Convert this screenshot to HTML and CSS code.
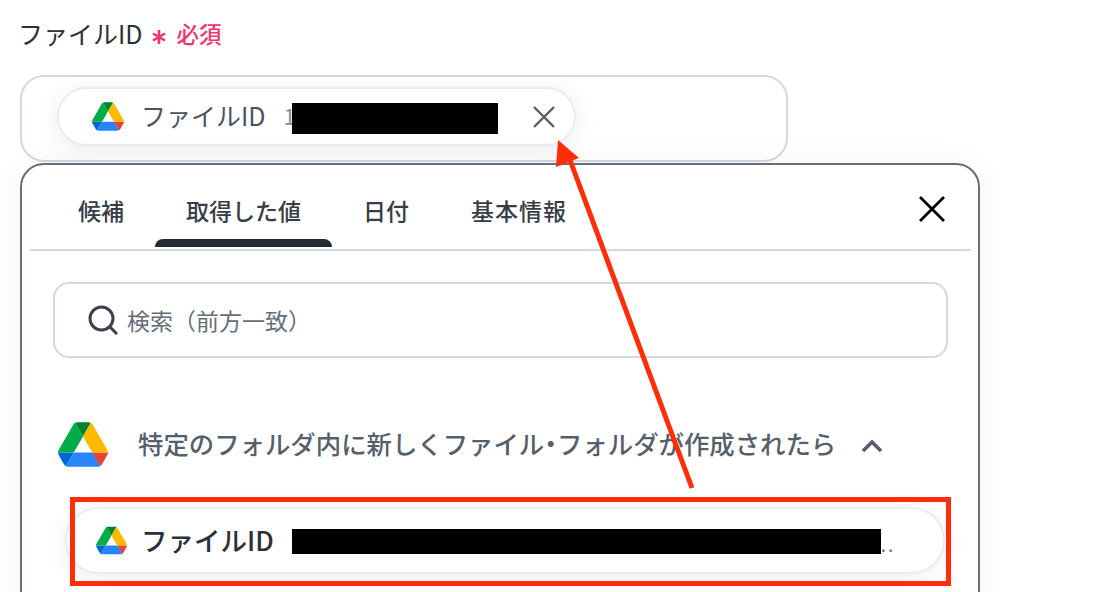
FILE: index.html
```html
<!DOCTYPE html>
<html lang="ja">
<head>
  <meta charset="UTF-8" />
  <meta name="viewport" content="width=device-width, initial-scale=1.0"/>
  <title>ファイルID</title>
  <link rel="stylesheet" href="styles.css">
</head>
<body>
  <svg class="defs" width="0" height="0">
    <symbol id="drive" viewBox="0 0 87.3 78">
      <path d="m6.6 66.85 3.85 6.65c.8 1.4 1.95 2.5 3.3 3.3l13.75-23.8h-27.5c0 1.55.4 3.1 1.2 4.5z" fill="#0066da"/>
      <path d="m43.65 25-13.75-23.8c-1.35.8-2.5 1.9-3.3 3.3l-25.4 44a9.06 9.06 0 0 0 -1.2 4.5h27.5z" fill="#00ac47"/>
      <path d="m73.55 76.8c1.35-.8 2.5-1.9 3.3-3.3l1.6-2.75 7.65-13.25c.8-1.4 1.2-2.95 1.2-4.5h-27.502l5.852 11.5z" fill="#ea4335"/>
      <path d="m43.65 25 13.75-23.8c-1.35-.8-2.9-1.2-4.5-1.2h-18.5c-1.6 0-3.15.45-4.5 1.2z" fill="#00832d"/>
      <path d="m59.8 53h-32.3l-13.75 23.8c1.35.8 2.9 1.2 4.5 1.2h50.8c1.6 0 3.15-.45 4.5-1.2z" fill="#2684fc"/>
      <path d="m73.4 26.5-12.7-22c-.8-1.4-1.95-2.5-3.3-3.3l-13.75 23.8 16.15 28h27.45c0-1.55-.4-3.1-1.2-4.5z" fill="#ffba00"/>
    </symbol>
  </svg>

  <div class="label-row">
    <span class="label">ファイルID</span>
    <svg class="asterisk" viewBox="0 0 16 16">
      <path d="M8 1v14M2 4.5l12 7M14 4.5l-12 7" stroke="#f0336b" stroke-width="2.6" fill="none"/>
    </svg>
    <span class="required">必須</span>
  </div>

  <div class="field">
    <div class="chip">
      <svg class="chip-icon"><use href="#drive"/></svg>
      <span class="chip-name">ファイルID</span>
      <span class="chip-value">1</span>
      <span class="redact redact-short"></span>
      <svg class="chip-close" viewBox="0 0 22 22">
        <path d="M1 1l20 20M21 1L1 21" stroke="#565f6b" stroke-width="2.4" fill="none"/>
      </svg>
    </div>
  </div>

  <div class="panel">
    <div class="tabs">
      <div class="tab">候補</div>
      <div class="tab active">取得した値</div>
      <div class="tab">日付</div>
      <div class="tab">基本情報</div>
      <svg class="panel-close" viewBox="0 0 28 28">
        <path d="M2 2l24 24M26 2L2 26" stroke="#000" stroke-width="2.8" fill="none"/>
      </svg>
    </div>

    <div class="panel-body">
      <div class="search">
        <svg class="search-icon" viewBox="0 0 30 30">
          <circle cx="13.5" cy="13.5" r="11.5" stroke="#3a424e" stroke-width="3" fill="none"/>
          <path d="M22 22l7 7" stroke="#3a424e" stroke-width="3" fill="none"/>
        </svg>
        <span class="search-text">検索（前方一致）</span>
      </div>

      <div class="group">
        <svg class="group-icon"><use href="#drive"/></svg>
        <span class="group-title">特定のフォルダ内に新しくファイル<span class="mid-dot">・</span>フォルダが作成されたら</span>
        <svg class="chevron" viewBox="0 0 22 14">
          <path d="M2 12l9-9 9 9" stroke="#565f6b" stroke-width="3.6" fill="none"/>
        </svg>
      </div>

      <div class="item">
        <svg class="item-icon"><use href="#drive"/></svg>
        <span class="item-name">ファイルID</span>
        <span class="redact redact-long"></span>
        <span class="item-dots">..</span>
      </div>
      <div class="item"></div>
    </div>
  </div>

  <!-- Annotation drawn on top of the screenshot -->
  <div class="mark-box"></div>
  <svg class="mark-arrow" viewBox="0 0 1108 592">
    <path d="M692 488L570 160" stroke="#ff2d08" stroke-width="5" fill="none"/>
    <path d="M558 140L579 158L556 167z" fill="#ff2d08"/>
  </svg>
</body>
</html>
```

FILE: styles.css
```css
* {
  margin: 0;
  padding: 0;
  box-sizing: border-box;
}

html, body {
  height: 592px;
  overflow: hidden;
}

body {
  background-color: #fff;
  font-family: "Noto Sans CJK JP", "Noto Sans", sans-serif;
  padding: 18px 0 0 20px;
  color: #2b3138;
}

.defs {
  position: absolute;
}

.label-row {
  display: flex;
  align-items: center;
  height: 30px;
  margin-bottom: 27px;
}

.label {
  font-size: 25px;
  line-height: 30px;
  color: #2b3138;
  margin-left: -2px;
}

.asterisk {
  width: 16px;
  height: 16px;
  margin: 7px 0 0 8px;
}

.required {
  font-size: 22.5px;
  font-weight: 500;
  color: #f0336b;
  margin-left: 10px;
}

.field {
  width: 768px;
  height: 87px;
  border: 2px solid #d3d9e2;
  border-radius: 24px;
  padding: 10px 0 0 35px;
}

.chip {
  display: flex;
  align-items: center;
  width: 519px;
  height: 59px;
  padding-left: 33px;
  background-color: #fff;
  border: 2px solid #e9ecf2;
  border-radius: 30px;
  box-shadow: 0 4px 24px rgba(0, 0, 0, 0.08);
}

.chip-icon {
  width: 32px;
  height: 29px;
  margin-right: 17px;
}

.chip-name {
  font-size: 25px;
  color: #4b5360;
  margin-bottom: 3px;
}

.chip-value {
  font-size: 22px;
  color: #8a919c;
  margin: 0 0 3px 18px;
  width: 8px;
}

.redact {
  display: block;
  background-color: #000;
}

.redact-short {
  width: 206px;
  height: 31px;
  margin-top: 3px;
}

.chip-close {
  width: 22px;
  height: 22px;
  margin-left: 35px;
}

.panel {
  width: 960px;
  height: 500px;
  margin-top: 1px;
  background-color: #fff;
  border: 2px solid #666e7a;
  border-radius: 24px;
  box-shadow: 0 0 30px rgba(0, 0, 0, 0.05);
}

.tabs {
  display: flex;
  align-items: flex-start;
  height: 86px;
  margin: 0 7px 0 8px;
  padding-left: 17px;
  border-bottom: 2px solid #d3d9e2;
}

.tab {
  height: 82px;
  padding: 28px 31px 0;
  font-size: 23px;
  line-height: 34px;
  font-weight: 500;
  color: #363d47;
}

.tab:last-of-type {
  letter-spacing: 1px;
}

.tab.active {
  position: relative;
}

.tab.active::after {
  content: "";
  position: absolute;
  left: 0;
  right: 0;
  bottom: 0;
  height: 8px;
  background-color: #262b31;
  border-radius: 8px 8px 0 0;
}

.panel-close {
  width: 28px;
  height: 28px;
  margin: 30px 25px 0 auto;
}

.panel-body {
  padding: 31px 30px 0 31px;
}

.search {
  display: flex;
  align-items: center;
  height: 76px;
  padding-left: 33px;
  border: 2px solid #d3d9e2;
  border-radius: 16px;
}

.search-icon {
  width: 30px;
  height: 30px;
  margin-right: 9px;
}

.search-text {
  font-size: 23px;
  color: #666e7a;
}

.group {
  display: flex;
  align-items: center;
  height: 46px;
  margin-top: 63px;
  padding-left: 5px;
}

.group-icon {
  width: 50px;
  height: 45px;
  margin-right: 30px;
}

.group-title {
  font-size: 25.4px;
  line-height: 44px;
  font-weight: 500;
  color: #565f6b;
  white-space: nowrap;
  margin-bottom: 2px;
}

.mid-dot {
  font-feature-settings: "palt";
}

.chevron {
  width: 22px;
  height: 14px;
  margin: 4px 0 0 25px;
}

.item {
  display: flex;
  align-items: center;
  height: 67px;
  margin: 40px 3px 16px 12px;
  padding-left: 29px;
  background-color: #fff;
  border: 2px solid #e9ecf2;
  border-radius: 34px;
  box-shadow: 0 4px 24px rgba(0, 0, 0, 0.07);
}

.item-icon {
  width: 31px;
  height: 29px;
  margin-right: 14px;
}

.item-name {
  font-size: 26.5px;
  font-weight: 500;
  color: #2b3138;
  margin-bottom: 3px;
}

.redact-long {
  width: 589px;
  height: 25px;
  margin: 2px 0 0 18px;
}

.item-dots {
  font-size: 19px;
  letter-spacing: 2px;
  color: #666e7a;
  margin-top: 6px;
}

/* red annotation */
.mark-box {
  position: absolute;
  left: 70px;
  top: 497px;
  width: 881px;
  height: 89px;
  border: 5px solid #ff2d08;
}

.mark-arrow {
  position: absolute;
  left: 0;
  top: 0;
  width: 1108px;
  height: 592px;
}
```
